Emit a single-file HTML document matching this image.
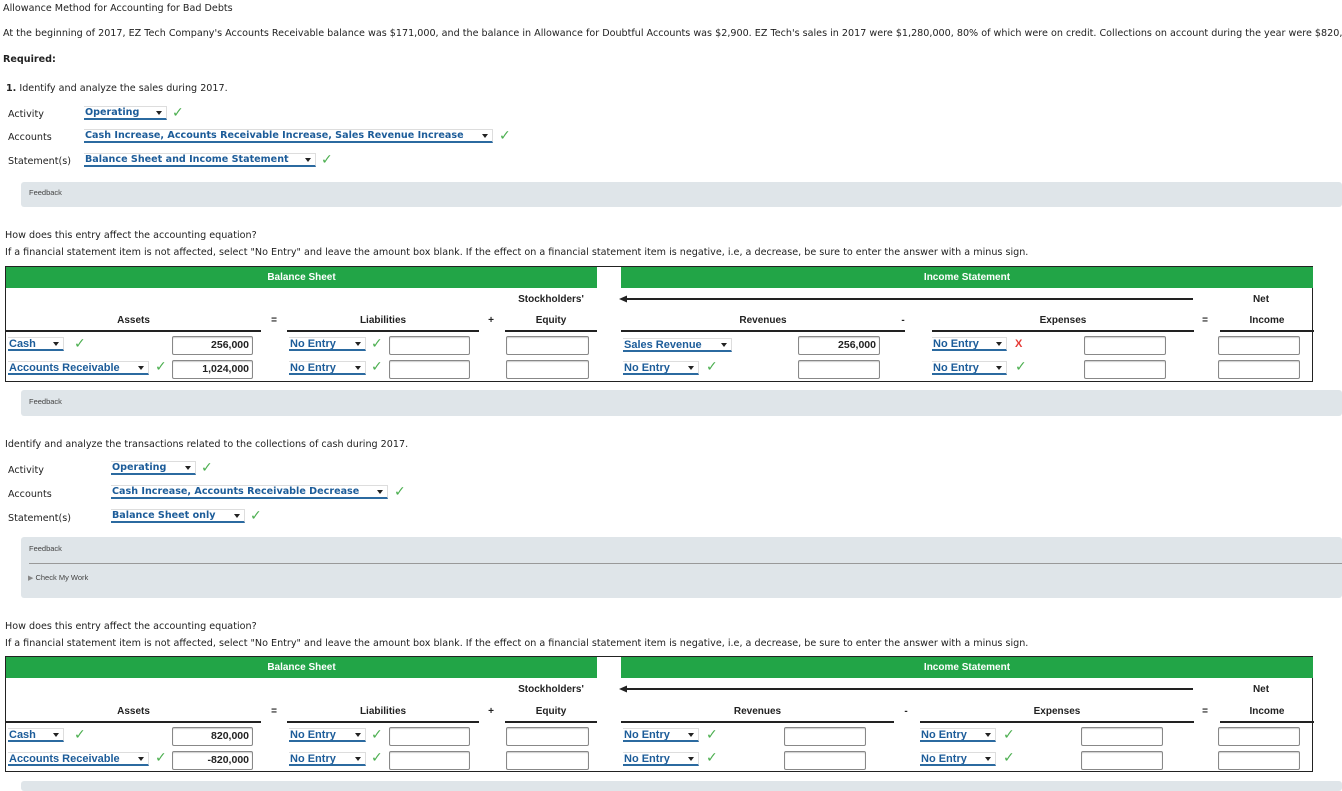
<!DOCTYPE html>
<html><head><meta charset="utf-8"><style>
*{margin:0;padding:0;box-sizing:border-box}
body{width:1342px;height:785px;overflow:hidden;background:#fff;position:relative;font-family:"DejaVu Sans","Liberation Sans",sans-serif;font-size:9.6px;color:#222}
.a{position:absolute;white-space:nowrap;line-height:12px}
.sel{position:absolute;height:14px;border-bottom:2px solid #2b6aa0;color:#1c5c99;font-weight:bold;font-size:9.6px;line-height:12px;padding-left:1px;white-space:nowrap;overflow:hidden;border-top:1px solid #ddd;border-right:1px solid #ddd}
.sel::after{content:"";position:absolute;right:4px;top:4px;border-left:3px solid transparent;border-right:3px solid transparent;border-top:4px solid #222}
.t .sel{font-family:"Liberation Sans",sans-serif;font-size:11px}
.ck{position:absolute;color:#4caf50;font-size:14px;line-height:12px;font-weight:bold;font-family:"DejaVu Sans",sans-serif}
.x{position:absolute;color:#e53935;font-size:11px;line-height:12px;font-weight:bold;font-family:"Liberation Sans",sans-serif}
.fb{position:absolute;left:21px;right:0;background:#dfe5e9;border-radius:3px}
.fb span{position:absolute;left:8px;font-family:"Liberation Sans",sans-serif;font-size:7.5px;color:#444}
.t{position:absolute;left:5px;width:1308px;height:116px;border:1px solid #222;font-family:"Liberation Sans",sans-serif}
.g{position:absolute;top:0;height:21px;background:#22a547;color:#fff;font-weight:bold;font-size:10px;text-align:center;line-height:21px}
.h{position:absolute;font-weight:bold;font-size:10px;text-align:center;line-height:12px}
.u{position:absolute;border-bottom:2px solid #222;height:0}
.in{position:absolute;height:19px;border:1px solid #888;border-radius:2px;box-shadow:inset 0 1px 1px #ccc;font-weight:bold;font-size:10.5px;text-align:right;padding-right:3px;line-height:17px;background:#fff}
</style></head><body>
<div class="a" style="left:3px;top:3px">Allowance Method for Accounting for Bad Debts</div>
<div class="a" style="left:3px;top:28px">At the beginning of 2017, EZ Tech Company's Accounts Receivable balance was $171,000, and the balance in Allowance for Doubtful Accounts was $2,900. EZ Tech's sales in 2017 were $1,280,000, 80% of which were on credit. Collections on account during the year were $820,000</div>
<div class="a" style="left:3px;top:54px;font-weight:bold">Required:</div>
<div class="a" style="left:6px;top:83px"><b>1.</b> Identify and analyze the sales during 2017.</div>
<div class="a" style="left:8px;top:109px">Activity</div>
<div class="sel" style="left:84px;top:106px;width:83px">Operating</div><div class="ck" style="left:172px;top:107px">✓</div>
<div class="a" style="left:8px;top:132px">Accounts</div>
<div class="sel" style="left:84px;top:129px;width:409px">Cash Increase, Accounts Receivable Increase, Sales Revenue Increase</div><div class="ck" style="left:499px;top:130px">✓</div>
<div class="a" style="left:8px;top:156px">Statement(s)</div>
<div class="sel" style="left:84px;top:153px;width:232px">Balance Sheet and Income Statement</div><div class="ck" style="left:321px;top:154px">✓</div>
<div class="fb" style="top:182px;height:25px"><span style="top:6px">Feedback</span></div>
<div class="a" style="left:5px;top:230px">How does this entry affect the accounting equation?</div>
<div class="a" style="left:5px;top:247px">If a financial statement item is not affected, select "No Entry" and leave the amount box blank. If the effect on a financial statement item is negative, i.e, a decrease, be sure to enter the answer with a minus sign.</div>

<!-- table 1 -->
<div class="t" style="top:266px">
<div class="g" style="left:0;width:591px">Balance Sheet</div>
<div class="g" style="left:615px;width:692px">Income Statement</div>
<div class="h" style="left:500px;width:90px;top:27px">Stockholders'</div>
<svg style="position:absolute;left:612px;top:27px" width="580" height="10"><path d="M6 5H575" stroke="#222" stroke-width="2"/><path d="M1 5L9 1.5V8.5Z" fill="#222"/></svg>
<div class="h" style="left:1215px;width:80px;top:27px">Net</div>
<div class="h" style="left:0;width:255px;top:48px">Assets</div>
<div class="h" style="left:262px;width:12px;top:48px">=</div>
<div class="h" style="left:281px;width:192px;top:48px">Liabilities</div>
<div class="h" style="left:479px;width:12px;top:48px">+</div>
<div class="h" style="left:499px;width:92px;top:48px">Equity</div>
<div class="h" style="left:615px;width:284px;top:48px">Revenues</div>
<div class="h" style="left:891px;width:12px;top:48px">-</div>
<div class="h" style="left:926px;width:262px;top:48px">Expenses</div>
<div class="h" style="left:1193px;width:12px;top:48px">=</div>
<div class="h" style="left:1214px;width:94px;top:48px">Income</div>
<div class="u" style="left:0;width:255px;top:63px"></div><div class="u" style="left:281px;width:192px;top:63px"></div><div class="u" style="left:499px;width:92px;top:63px"></div>
<div class="u" style="left:615px;width:284px;top:63px"></div><div class="u" style="left:926px;width:262px;top:63px"></div><div class="u" style="left:1214px;width:94px;top:63px"></div>
<div class="sel" style="left:2px;top:70px;width:56px">Cash</div><div class="ck" style="left:68px;top:71px">✓</div>
<div class="in" style="left:166px;top:69px;width:81px">256,000</div>
<div class="sel" style="left:283px;top:70px;width:77px">No Entry</div><div class="ck" style="left:365px;top:71px">✓</div>
<div class="in" style="left:383px;top:69px;width:81px"></div>
<div class="in" style="left:500px;top:69px;width:83px"></div>
<div class="sel" style="left:617px;top:71px;width:109px">Sales Revenue</div>
<div class="in" style="left:792px;top:69px;width:82px">256,000</div>
<div class="sel" style="left:926px;top:70px;width:75px">No Entry</div><div class="x" style="left:1009px;top:71px">X</div>
<div class="in" style="left:1078px;top:69px;width:82px"></div>
<div class="in" style="left:1212px;top:69px;width:82px"></div>
<div class="sel" style="left:2px;top:94px;width:141px">Accounts Receivable</div><div class="ck" style="left:149px;top:94px">✓</div>
<div class="in" style="left:166px;top:93px;width:81px">1,024,000</div>
<div class="sel" style="left:283px;top:94px;width:77px">No Entry</div><div class="ck" style="left:365px;top:94px">✓</div>
<div class="in" style="left:383px;top:93px;width:81px"></div>
<div class="in" style="left:500px;top:93px;width:83px"></div>
<div class="sel" style="left:617px;top:94px;width:76px">No Entry</div><div class="ck" style="left:700px;top:94px">✓</div>
<div class="in" style="left:792px;top:93px;width:82px"></div>
<div class="sel" style="left:926px;top:94px;width:75px">No Entry</div><div class="ck" style="left:1009px;top:94px">✓</div>
<div class="in" style="left:1078px;top:93px;width:82px"></div>
<div class="in" style="left:1212px;top:93px;width:82px"></div>
</div>

<div class="fb" style="top:390px;height:26px"><span style="top:7px">Feedback</span></div>
<div class="a" style="left:5px;top:439px">Identify and analyze the transactions related to the collections of cash during 2017.</div>
<div class="a" style="left:8px;top:465px">Activity</div>
<div class="sel" style="left:111px;top:461px;width:85px">Operating</div><div class="ck" style="left:201px;top:462px">✓</div>
<div class="a" style="left:8px;top:489px">Accounts</div>
<div class="sel" style="left:111px;top:485px;width:277px">Cash Increase, Accounts Receivable Decrease</div><div class="ck" style="left:394px;top:486px">✓</div>
<div class="a" style="left:8px;top:513px">Statement(s)</div>
<div class="sel" style="left:111px;top:509px;width:134px">Balance Sheet only</div><div class="ck" style="left:250px;top:510px">✓</div>
<div class="fb" style="top:537px;height:61px"><span style="top:7px">Feedback</span>
<div style="position:absolute;left:8px;right:0;top:26px;border-top:1px solid #999"></div>
<span style="top:36px;left:7px"><span style="position:static;color:#888;font-size:7px">&#9654;</span> Check My Work</span></div>
<div class="a" style="left:5px;top:621px">How does this entry affect the accounting equation?</div>
<div class="a" style="left:5px;top:638px">If a financial statement item is not affected, select "No Entry" and leave the amount box blank. If the effect on a financial statement item is negative, i.e, a decrease, be sure to enter the answer with a minus sign.</div>

<!-- table 2 -->
<div class="t" style="top:656px">
<div class="g" style="left:0;width:591px">Balance Sheet</div>
<div class="g" style="left:615px;width:692px">Income Statement</div>
<div class="h" style="left:500px;width:90px;top:27px">Stockholders'</div>
<svg style="position:absolute;left:612px;top:27px" width="580" height="10"><path d="M6 5H575" stroke="#222" stroke-width="2"/><path d="M1 5L9 1.5V8.5Z" fill="#222"/></svg>
<div class="h" style="left:1215px;width:80px;top:27px">Net</div>
<div class="h" style="left:0;width:255px;top:49px">Assets</div>
<div class="h" style="left:262px;width:12px;top:49px">=</div>
<div class="h" style="left:281px;width:192px;top:49px">Liabilities</div>
<div class="h" style="left:479px;width:12px;top:49px">+</div>
<div class="h" style="left:499px;width:92px;top:49px">Equity</div>
<div class="h" style="left:615px;width:273px;top:49px">Revenues</div>
<div class="h" style="left:894px;width:12px;top:49px">-</div>
<div class="h" style="left:914px;width:274px;top:49px">Expenses</div>
<div class="h" style="left:1193px;width:12px;top:49px">=</div>
<div class="h" style="left:1214px;width:94px;top:49px">Income</div>
<div class="u" style="left:0;width:255px;top:64px"></div><div class="u" style="left:281px;width:192px;top:64px"></div><div class="u" style="left:499px;width:92px;top:64px"></div>
<div class="u" style="left:615px;width:273px;top:64px"></div><div class="u" style="left:914px;width:274px;top:64px"></div><div class="u" style="left:1214px;width:94px;top:64px"></div>
<div class="sel" style="left:2px;top:71px;width:56px">Cash</div><div class="ck" style="left:68px;top:72px">✓</div>
<div class="in" style="left:166px;top:70px;width:81px">820,000</div>
<div class="sel" style="left:283px;top:71px;width:77px">No Entry</div><div class="ck" style="left:365px;top:72px">✓</div>
<div class="in" style="left:383px;top:70px;width:81px"></div>
<div class="in" style="left:500px;top:70px;width:83px"></div>
<div class="sel" style="left:617px;top:71px;width:76px">No Entry</div><div class="ck" style="left:700px;top:72px">✓</div>
<div class="in" style="left:778px;top:70px;width:82px"></div>
<div class="sel" style="left:914px;top:71px;width:76px">No Entry</div><div class="ck" style="left:997px;top:72px">✓</div>
<div class="in" style="left:1075px;top:70px;width:82px"></div>
<div class="in" style="left:1212px;top:70px;width:82px"></div>
<div class="sel" style="left:2px;top:95px;width:141px">Accounts Receivable</div><div class="ck" style="left:149px;top:95px">✓</div>
<div class="in" style="left:166px;top:94px;width:81px">-820,000</div>
<div class="sel" style="left:283px;top:95px;width:77px">No Entry</div><div class="ck" style="left:365px;top:95px">✓</div>
<div class="in" style="left:383px;top:94px;width:81px"></div>
<div class="in" style="left:500px;top:94px;width:83px"></div>
<div class="sel" style="left:617px;top:95px;width:76px">No Entry</div><div class="ck" style="left:700px;top:95px">✓</div>
<div class="in" style="left:778px;top:94px;width:82px"></div>
<div class="sel" style="left:914px;top:95px;width:76px">No Entry</div><div class="ck" style="left:997px;top:95px">✓</div>
<div class="in" style="left:1075px;top:94px;width:82px"></div>
<div class="in" style="left:1212px;top:94px;width:82px"></div>
</div>
<div class="fb" style="top:781px;height:10px"></div>
</body></html>
